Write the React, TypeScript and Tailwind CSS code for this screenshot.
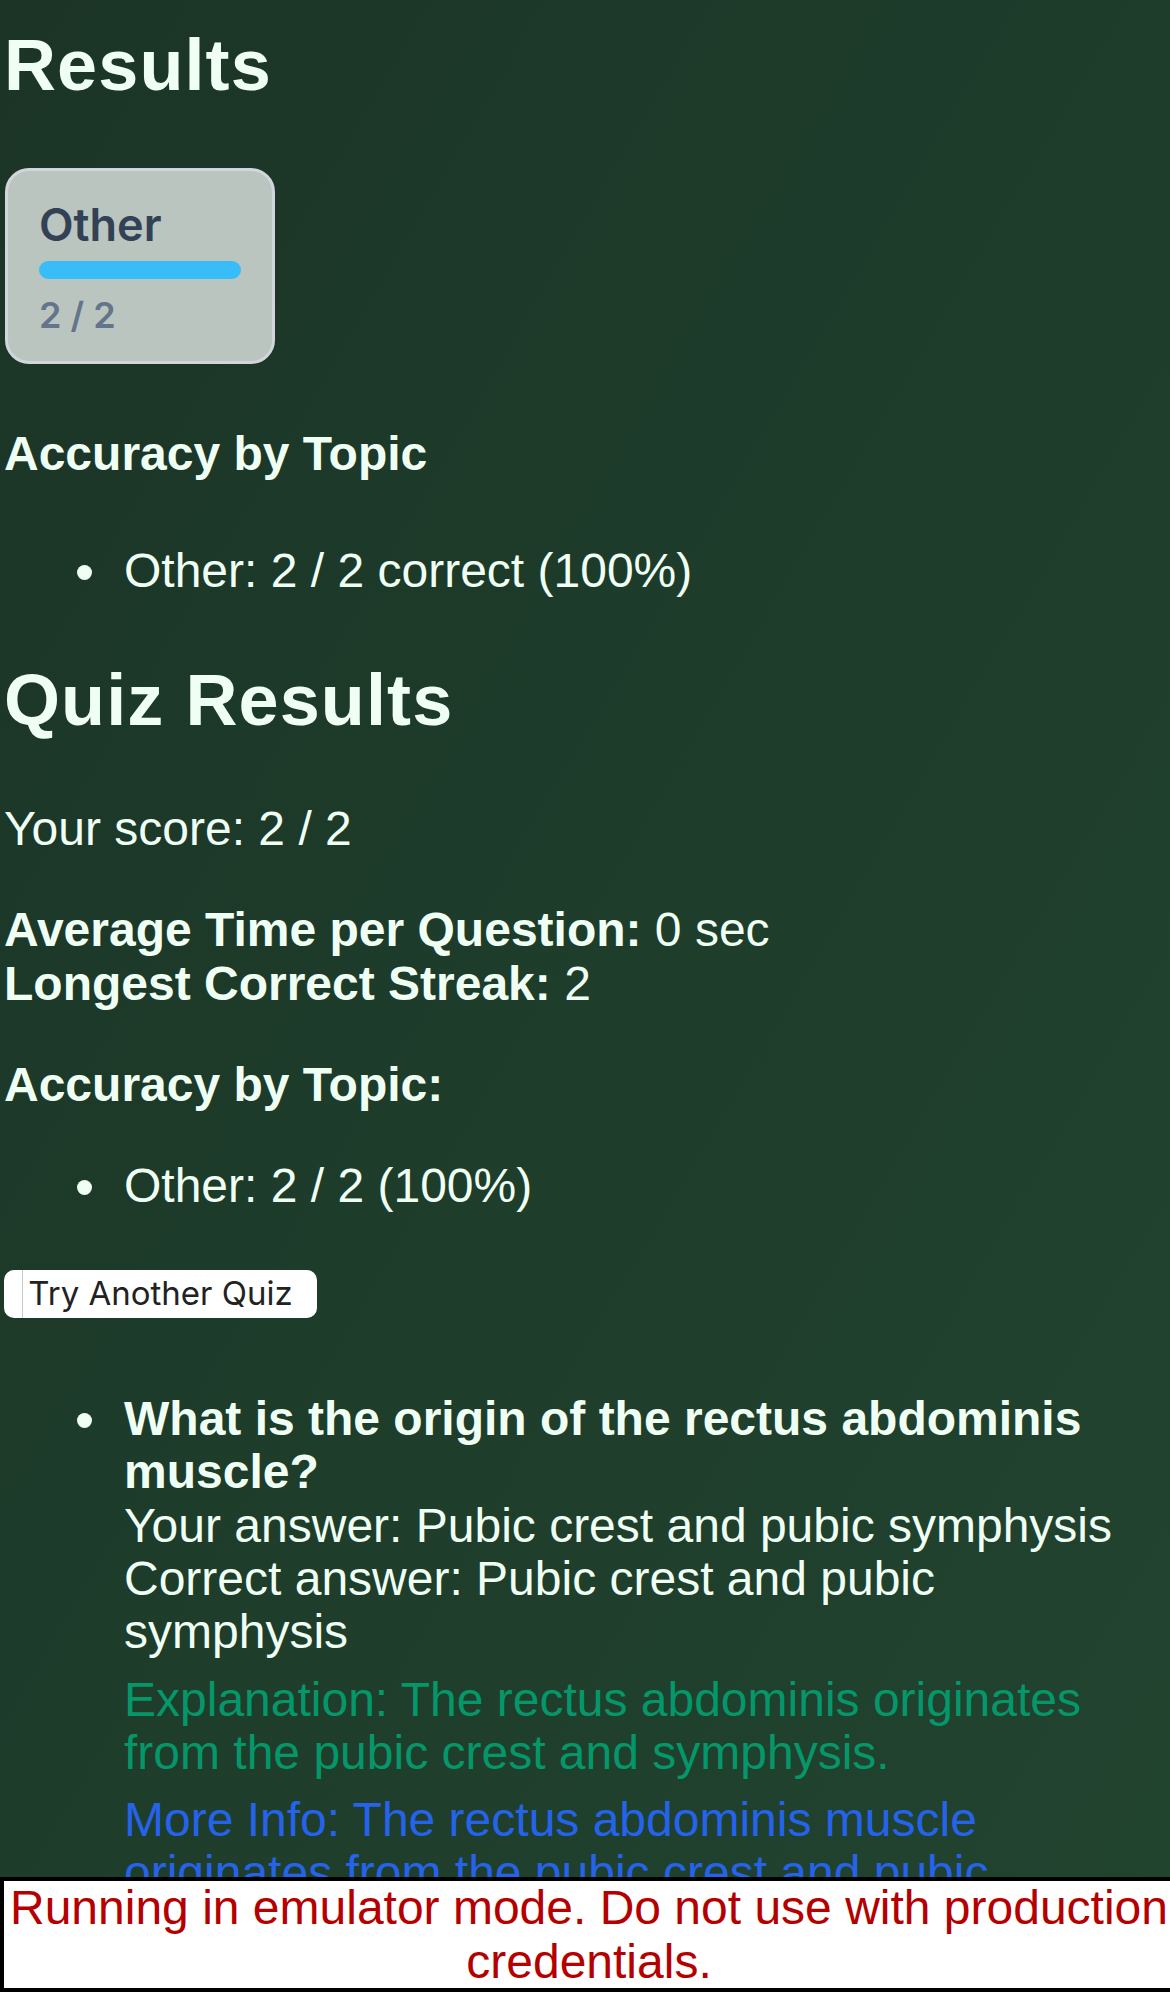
import React from 'react';

type TopicStat = { topic: string; correct: number; total: number };

const stats: TopicStat[] = [{ topic: 'Other', correct: 2, total: 2 }];

const pctOf = (s: TopicStat) => Math.round((s.correct / s.total) * 100);

// bullet row: dot column is 120px wide like the default list indent
const Bullet: React.FC<{ children: React.ReactNode }> = ({ children }) => (
  <li className="flex">
    <span className="w-[120px] shrink-0 pl-[73px] pt-[21px]">
      <span className="block h-[15px] w-[15px] rounded-full bg-[#effff4]"></span>
    </span>
    <div className="min-w-0 flex-1">{children}</div>
  </li>
);

const TopicCard: React.FC<{ stat: TopicStat }> = ({ stat }) => (
  <div className="mt-[63px] ml-px w-[270px] h-[196px] rounded-[24px] border-[3px] border-[#d3d5dc] bg-[#bac5bf] px-[31px] pt-[31px] font-['Inter',sans-serif]">
    <div className="text-[45px] leading-[45px] font-semibold text-[#334155]">{stat.topic}</div>
    <div className="mt-[14px] h-[18px] w-full rounded-full">
      <div className="h-[18px] rounded-full bg-[#38bdf8]" style={{ width: `${pctOf(stat)}%` }}></div>
    </div>
    <div className="mt-[18px] text-[36px] leading-[36px] font-semibold text-[#64748b]">
      {stat.correct} / {stat.total}
    </div>
  </div>
);

const App: React.FC = () => {
  return (
    <div className="h-screen overflow-hidden bg-gradient-to-br from-[#1b3426] via-[#1e3d2b] to-[#21442f] px-[4px] pt-[25px] font-['Liberation_Sans',Arial,sans-serif] text-[48px] leading-[53.4px] text-[#effff4]">
      <h2 className="text-[72px] leading-[80px] font-bold tracking-[1.1px]">Results</h2>

      {stats.map(s => (
        <TopicCard key={s.topic} stat={s} />
      ))}

      <h4 className="mt-[63px] font-bold">Accuracy by Topic</h4>
      <ul className="mt-[64px]">
        {stats.map(s => (
          <Bullet key={s.topic}>
            {s.topic}: {s.correct} / {s.total} correct ({pctOf(s)}%)
          </Bullet>
        ))}
      </ul>

      <h2 className="mt-[62px] text-[72px] leading-[80px] font-bold tracking-[1.1px]">Quiz Results</h2>
      <p className="mt-[62px]">Your score: 2 / 2</p>
      <p className="mt-[48px]">
        <strong>Average Time per Question:</strong> 0 sec
        <br />
        <strong>Longest Correct Streak:</strong> 2
      </p>
      <p className="mt-[48px] font-bold">Accuracy by Topic:</p>
      <ul className="mt-[48px]">
        {stats.map(s => (
          <Bullet key={s.topic}>
            {s.topic}: {s.correct} / {s.total} ({pctOf(s)}%)
          </Bullet>
        ))}
      </ul>

      <button className="relative mt-[57px] flex h-[48px] w-[313px] items-center justify-center rounded-[10px] bg-white font-['Inter',sans-serif] text-[33px] leading-none text-[#222222]">
        <span className="absolute left-[18px] top-0 bottom-0 w-px bg-[#c5cbc8]"></span>
        Try Another Quiz
      </button>

      <ul className="mt-[74px]">
        <Bullet>
          <strong>What is the origin of the rectus abdominis muscle?</strong>
          <br />
          Your answer: Pubic crest and pubic symphysis
          <br />
          Correct answer: Pubic crest and pubic symphysis
          <p className="mt-[14px] text-[#059669]">
            Explanation: The rectus abdominis originates from the pubic crest and symphysis.
          </p>
          <p className="mt-[13px] text-[#2563eb]">
            More Info: The rectus abdominis muscle originates from the pubic crest and pubic symphysis and inserts
            into the xiphoid process and the costal cartilages of ribs 5 to 7.
          </p>
        </Bullet>
      </ul>

      <p className="fixed bottom-0 left-0 box-content w-full border-[4.5px] border-black bg-white text-center text-[#b50000]">
        Running in emulator mode. Do not use with production credentials.
      </p>
    </div>
  );
};

export default App;
